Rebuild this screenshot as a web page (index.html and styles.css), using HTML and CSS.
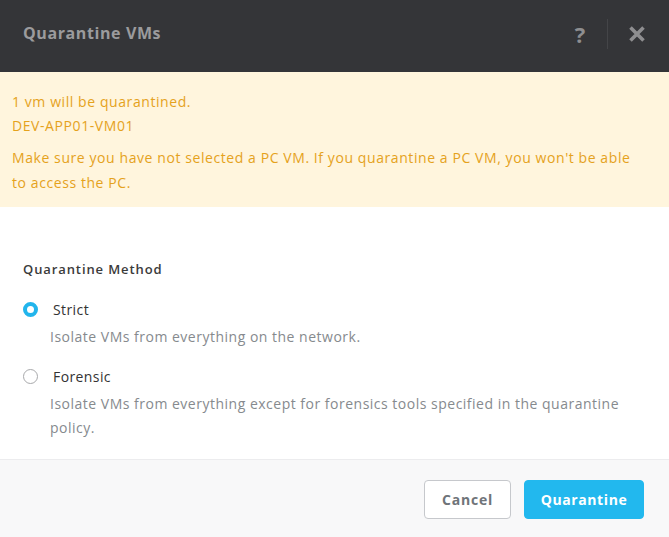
FILE: index.html
```html
<!DOCTYPE html>
<html>
<head>
<meta charset="utf-8">
<link rel="stylesheet" href="styles.css">
</head>
<body>
<div class="modal">
  <div class="header">
    <div class="title">Quarantine VMs</div>
    <div class="actions">
      <span class="help">?</span>
      <span class="divider"></span>
      <span class="close">
        <svg width="18" height="18" viewBox="0 0 18 18"><path d="M2.5 2.5 L15.5 15.5 M15.5 2.5 L2.5 15.5" stroke="#8e8e90" stroke-width="3.6" stroke-linecap="butt"/></svg>
      </span>
    </div>
  </div>
  <div class="warning">
    <p class="line">1 vm will be quarantined.</p>
    <p class="line">DEV-APP01-VM01</p>
    <p class="line note">Make sure you have not selected a PC VM. If you quarantine a PC VM, you won't be able to access the PC.</p>
  </div>
  <div class="body">
    <div class="label">Quarantine Method</div>
    <div class="option">
      <div class="opt-row"><span class="radio checked"></span><span class="opt-title">Strict</span></div>
      <div class="opt-desc">Isolate VMs from everything on the network.</div>
    </div>
    <div class="option second">
      <div class="opt-row"><span class="radio"></span><span class="opt-title">Forensic</span></div>
      <div class="opt-desc">Isolate VMs from everything except for forensics tools specified in the quarantine policy.</div>
    </div>
  </div>
  <div class="footer">
    <button class="btn cancel">Cancel</button>
    <button class="btn primary">Quarantine</button>
  </div>
</div>
</body>
</html>
```
FILE: styles.css
```css
* { box-sizing: border-box; }
html, body { margin: 0; padding: 0; }
body { width: 669px; height: 537px; overflow: hidden; font-family: "Open Sans", sans-serif; background: #fff; }
.modal { display: flex; flex-direction: column; height: 537px; }
.header { height: 72px; background: #343538; display: flex; align-items: center; justify-content: space-between; padding: 0 23px 0 23px; }
.title { color: #9b9b9d; font-weight: 700; font-size: 16px; letter-spacing: 0.6px; padding-bottom: 6px; }
.actions { display: flex; align-items: center; height: 72px; padding-bottom: 4px; }
.help { color: #8e8e90; font-weight: 700; font-size: 22px; width: 20px; text-align: center; margin-right: 17px; }
.divider { width: 1px; height: 30px; background: #444548; margin-right: 20px; }
.close { display: flex; align-items: center; }
.warning { background: #fff5dd; height: 135px; padding: 18px 28px 0 12px; color: #e5a21c; font-size: 14px; letter-spacing: 0.58px; }
.line { margin: 0; line-height: 24px; }
.note { margin-top: 7px; line-height: 25px; }
.body { flex: 1; padding: 52px 23px 0 23px; }
.label { font-size: 13px; font-weight: 600; color: #3b3b3b; letter-spacing: 0.9px; line-height: 20px; }
.option { margin-top: 20px; }
.option.second { margin-top: 17px; }
.opt-row { display: flex; align-items: center; height: 20px; }
.radio { width: 15px; height: 15px; border-radius: 50%; border: 1px solid #a8a9ab; margin-right: 15px; background: #fff; }
.radio.checked { border: 4.5px solid #22b5ec; }
.opt-title { font-size: 14px; color: #333; letter-spacing: 0.4px; }
.opt-desc { margin-top: 6px; padding-left: 27px; font-size: 14px; color: #868a8e; line-height: 24px; letter-spacing: 0.5px; }
.footer { height: 78px; background: #f8f8f9; border-top: 1px solid #ececee; display: flex; justify-content: flex-end; align-items: center; padding: 2px 25px 0 0; gap: 13px; }
.btn { height: 39px; border-radius: 4px; font-family: "Open Sans", sans-serif; font-weight: 700; font-size: 14px; letter-spacing: 0.8px; cursor: pointer; }
.cancel { width: 87px; background: #fff; border: 1px solid #c6c8cc; color: #6f7479; }
.primary { width: 120px; background: #22b8ee; border: 1px solid #22b8ee; color: #fff; letter-spacing: 0.6px; }
```
